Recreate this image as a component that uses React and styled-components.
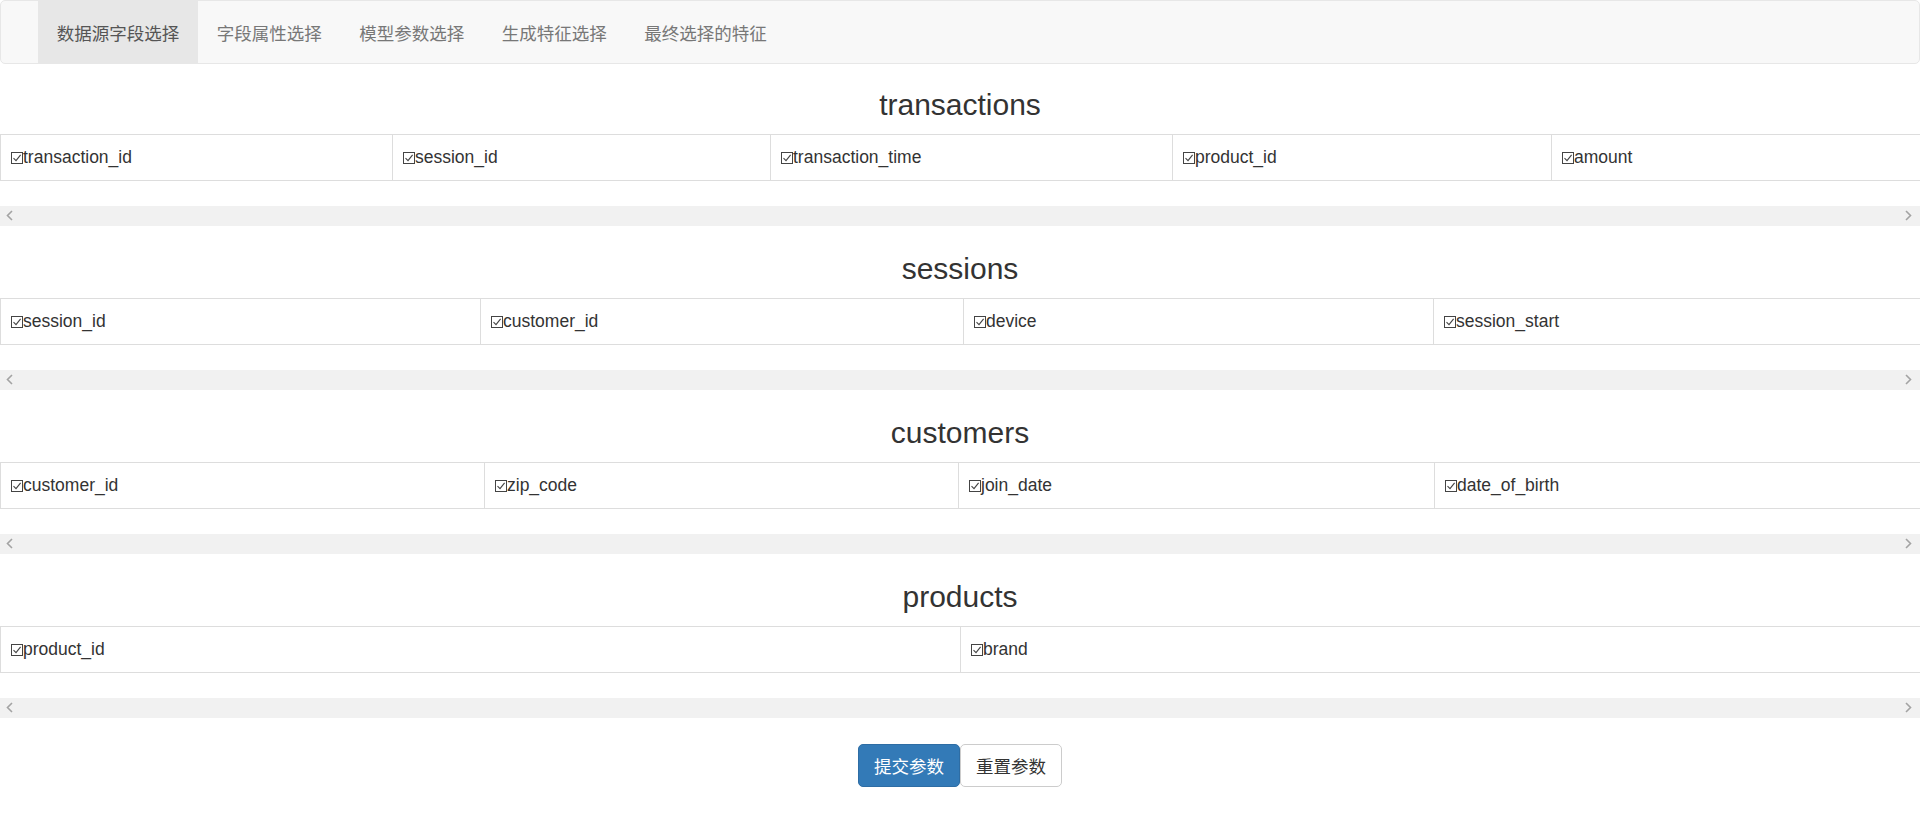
import React from "react";
import styled, { createGlobalStyle } from "styled-components";

const GlobalStyle = createGlobalStyle`
  html, body { margin: 0; padding: 0; background: #fff; }
  body {
    font-family: "Liberation Sans", Arial, "Noto Sans CJK SC", sans-serif;
    font-size: 17.5px;
    line-height: 25px;
    color: #333;
  }
  * { box-sizing: border-box; }
`;

const Page = styled.div`
  width: 1920px;
`;

const Navbar = styled.nav`
  height: 64px;
  background: #f8f8f8;
  border: 1px solid #e7e7e7;
  border-radius: 5px;
  padding: 0 37px;
  margin-bottom: 24px;
`;

const NavList = styled.ul`
  display: flex;
  list-style: none;
  margin: 0;
  padding: 0;
  height: 62px;
`;

const NavItem = styled.li`
  display: block;
`;

const NavLink = styled.a`
  display: block;
  padding: 18.5px 18.75px 18.5px;
  line-height: 25px;
  font-size: 17.5px;
  font-family: "Noto Sans CJK SC", "Liberation Sans", sans-serif;
  color: ${(p) => (p.$active ? "#555" : "#777")};
  background: ${(p) => (p.$active ? "#e7e7e7" : "transparent")};
  text-decoration: none;
  cursor: pointer;
`;

const Section = styled.section`
  margin-bottom: 26.5px;
`;

const Title = styled.h3`
  margin: 0 0 12.5px;
  font-family: "Liberation Sans", Arial, sans-serif;
  font-size: 30px;
  font-weight: 400;
  line-height: 33px;
  text-align: center;
  color: #333;
`;

const Table = styled.table`
  width: 100%;
  table-layout: fixed;
  border-collapse: collapse;
  border: 1px solid #ddd;
  margin-bottom: 25px;
`;

const Col = styled.col`
  width: ${(p) => p.$w}px;
`;

const Cell = styled.td`
  border: 1px solid #ddd;
  padding: 10px 10px;
  line-height: 25px;
  font-size: 17.5px;
  color: #333;
  white-space: nowrap;
  vertical-align: top;
`;

const CheckIcon = styled.svg`
  display: inline-block;
  width: 12px;
  height: 12px;
  vertical-align: -1px;
`;

const ScrollTrack = styled.div`
  height: 20px;
  background: #f1f1f1;
  display: flex;
  align-items: center;
  justify-content: space-between;
  padding: 0 8px 0 6px;
`;

const Chevron = styled.svg`
  width: 7px;
  height: 11px;
  display: block;
`;

const ButtonRow = styled.div`
  display: flex;
  justify-content: center;
`;

const Button = styled.button`
  font-family: "Noto Sans CJK SC", "Liberation Sans", sans-serif;
  font-size: 17.5px;
  line-height: 25px;
  padding: 7.5px 15px;
  height: 42.5px;
  border-radius: 5px;
  border: 1px solid ${(p) => (p.$primary ? "#2e6da4" : "#ccc")};
  background: ${(p) => (p.$primary ? "#337ab7" : "#fff")};
  color: ${(p) => (p.$primary ? "#fff" : "#333")};
  margin: 0;
  cursor: pointer;
`;

const Check = () => (
  <CheckIcon viewBox="0 0 12 12">
    <rect x="0.5" y="0.5" width="11" height="11" fill="none" stroke="#444" strokeWidth="1" />
    <path d="M2.5 6.2 L5 8.6 L9.6 2.8" fill="none" stroke="#444" strokeWidth="1.1" />
  </CheckIcon>
);

const tables = [
  {
    name: "transactions",
    cols: [392, 378, 402, 379, 369],
    fields: ["transaction_id", "session_id", "transaction_time", "product_id", "amount"],
  },
  {
    name: "sessions",
    cols: [480, 483, 470, 487],
    fields: ["session_id", "customer_id", "device", "session_start"],
  },
  {
    name: "customers",
    cols: [484, 474, 476, 486],
    fields: ["customer_id", "zip_code", "join_date", "date_of_birth"],
  },
  {
    name: "products",
    cols: [960, 960],
    fields: ["product_id", "brand"],
  },
];

const tabs = ["数据源字段选择", "字段属性选择", "模型参数选择", "生成特征选择", "最终选择的特征"];

export default function App() {
  return (
    <Page>
      <GlobalStyle />
      <Navbar>
        <NavList>
          {tabs.map((t, i) => (
            <NavItem key={t}>
              <NavLink $active={i === 0}>{t}</NavLink>
            </NavItem>
          ))}
        </NavList>
      </Navbar>
      {tables.map((t) => (
        <Section key={t.name}>
          <Title>{t.name}</Title>
          <Table>
            <colgroup>
              {t.cols.map((w, i) => (
                <Col key={i} $w={w} />
              ))}
            </colgroup>
            <tbody>
              <tr>
                {t.fields.map((f) => (
                  <Cell key={f}>
                    <Check />
                    {f}
                  </Cell>
                ))}
              </tr>
            </tbody>
          </Table>
          <ScrollTrack>
            <Chevron viewBox="0 0 7 11">
              <path d="M6 1 L1.5 5.5 L6 10" fill="none" stroke="#a3a3a3" strokeWidth="1.6" />
            </Chevron>
            <Chevron viewBox="0 0 7 11">
              <path d="M1 1 L5.5 5.5 L1 10" fill="none" stroke="#a3a3a3" strokeWidth="1.6" />
            </Chevron>
          </ScrollTrack>
        </Section>
      ))}
      <ButtonRow>
        <Button $primary>提交参数</Button>
        <Button>重置参数</Button>
      </ButtonRow>
    </Page>
  );
}
